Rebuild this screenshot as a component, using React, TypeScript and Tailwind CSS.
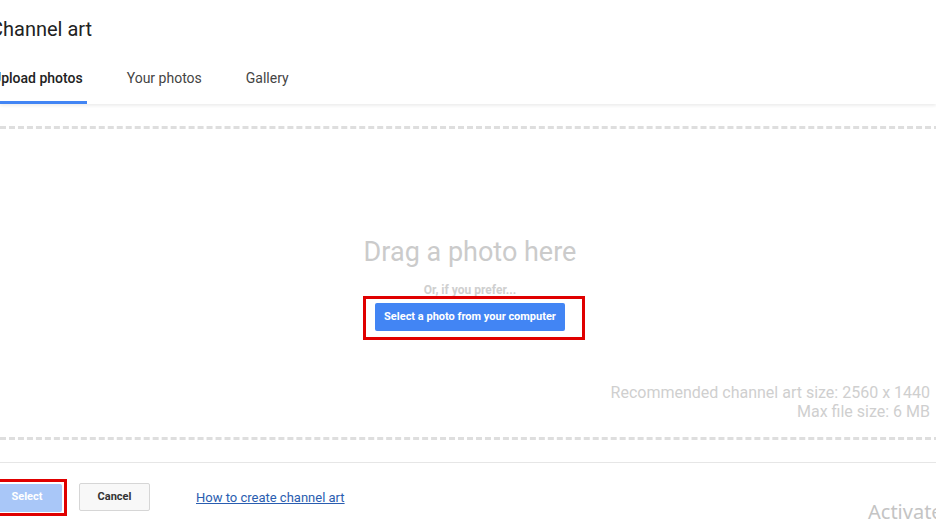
const tabs = [
  { label: 'Upload photos', active: true },
  { label: 'Your photos', active: false },
  { label: 'Gallery', active: false },
];

export default function App() {
  return (
    <div className="relative w-[936px] h-[527px] overflow-hidden bg-white font-['Roboto','Liberation_Sans',sans-serif]">
      {/* Header */}
      <header className="relative z-10 bg-white shadow-[0_2px_3px_rgba(0,0,0,0.07)]">
        <div className="-ml-[13px]">
          <h1 className="pl-[3px] pt-[16px] text-[20px] leading-[26px] text-[#222]">Channel art</h1>
          <nav className="mt-[14px] flex gap-[36px] pl-[1px]">
            {tabs.map((tab) => (
              <div
                key={tab.label}
                className={
                  tab.active
                    ? 'px-[4px] pt-[12px] pb-[13px] border-b-[3px] border-[#4285f4] text-[14px] leading-[20px] font-medium text-[#222]'
                    : 'px-[4px] pt-[12px] pb-[13px] border-b-[3px] border-transparent text-[14px] leading-[20px] text-[#444]'
                }
              >
                {tab.label}
              </div>
            ))}
          </nav>
        </div>
      </header>

      {/* Drop zone */}
      <div className="pt-[22px] w-[940px]">
        <div className="flex flex-col items-center border-y-[3px] border-dashed border-[#dedede] pt-[107px] pb-[16px]">
          <p className="text-[27px] leading-[32px] text-[#cbcbcb]">Drag a photo here</p>
          <p className="mt-[14px] text-[12px] leading-[16px] font-bold text-[#cfcfcf]">Or, if you prefer...</p>
          <div className="relative mt-[5px]">
            <button className="h-[28px] w-[190px] rounded-[2px] bg-[#4285f4] text-[11px] font-bold text-white">
              Select a photo from your computer
            </button>
            <div className="absolute -left-[12px] -right-[20px] -top-[7px] -bottom-[9px] border-[3px] border-[#e00000]" />
          </div>
          <div className="mt-[52px] self-end pr-[10px] text-right text-[16px] leading-[19px] text-[#cfcfcf]">
            <p>Recommended channel art size: 2560 x 1440</p>
            <p>Max file size: 6 MB</p>
          </div>
        </div>
      </div>

      {/* Footer */}
      <div className="mt-[22px] border-t border-[#e6e6e6]" />
      <div className="-ml-[8px] mt-[20px] flex items-center">
        <div className="relative">
          <button className="h-[28px] w-[70px] rounded-[2px] bg-[#a9c7f8] text-[11px] font-bold text-white">
            Select
          </button>
          <div className="absolute -left-[4px] -right-[5px] -top-[4px] -bottom-[4px] border-[3px] border-[#e00000]" />
        </div>
        <button className="ml-[17px] h-[28px] w-[71px] rounded-[2px] border border-[#d6d6d6] bg-[#f8f8f8] text-[11px] font-bold text-[#333]">
          Cancel
        </button>
        <a className="ml-[46px] text-[13px] text-[#2a5db0] underline cursor-pointer">How to create channel art</a>
      </div>

      {/* Windows watermark */}
      <span className="absolute left-[868px] top-[500px] text-[20px] leading-[24px] text-[#c4c4c4] font-['Noto_Sans',sans-serif]">
        Activate
      </span>
    </div>
  );
}
